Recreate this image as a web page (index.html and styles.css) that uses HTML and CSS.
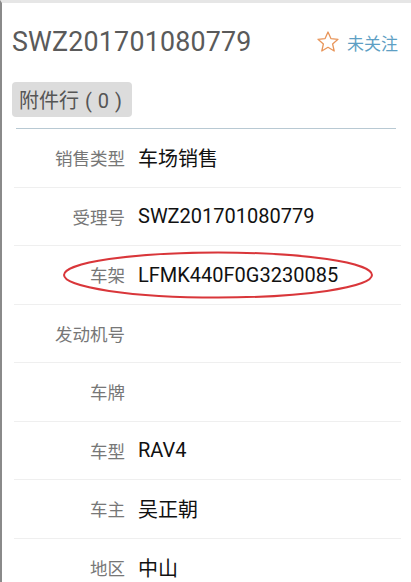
FILE: index.html
```html
<!DOCTYPE html>
<html lang="zh">
<head>
<meta charset="utf-8">
<link rel="stylesheet" href="styles.css">
</head>
<body>
<div class="page">
  <header class="head">
    <h1 class="title">SWZ201701080779</h1>
    <div class="follow">
      <svg class="star" viewBox="0 0 24 24" width="24" height="24"><polygon points="12,2 14.9,8.6 22,9.3 16.6,14 18.2,21 12,17.3 5.8,21 7.4,14 2,9.3 9.1,8.6" fill="none" stroke="#e8955a" stroke-width="1.3" stroke-linejoin="round"/></svg>
      <span class="follow-text">未关注</span>
    </div>
  </header>
  <div class="attach-wrap"><button class="attach">附件行 ( 0 )</button></div>
  <div class="sep"></div>
  <div class="list">
    <div class="row"><span class="label">销售类型</span><span class="value">车场销售</span></div>
    <div class="row"><span class="label">受理号</span><span class="value">SWZ201701080779</span></div>
    <div class="row marked"><span class="label">车架</span><span class="value">LFMK440F0G3230085</span>
      <svg class="ring" viewBox="0 0 312 50" width="312" height="50"><ellipse cx="156" cy="25" rx="154" ry="22.5" fill="none" stroke="#d9363a" stroke-width="2"/></svg>
    </div>
    <div class="row"><span class="label">发动机号</span><span class="value"></span></div>
    <div class="row"><span class="label">车牌</span><span class="value"></span></div>
    <div class="row"><span class="label">车型</span><span class="value">RAV4</span></div>
    <div class="row"><span class="label">车主</span><span class="value">吴正朝</span></div>
    <div class="row"><span class="label">地区</span><span class="value">中山</span></div>
  </div>
</div>
</body>
</html>
```

FILE: styles.css
```css
html, body {
  margin: 0;
  padding: 0;
  background: #fff;
  height: 100%;
  overflow: hidden;
}
body {
  font-family: "Roboto", "Noto Sans CJK SC", sans-serif;
}
.page {
  border-left: 2px solid #8a8a8a;
  border-top: 3px solid #e6e6e6;
  min-height: 100%;
  box-sizing: border-box;
}
.head {
  display: flex;
  align-items: center;
  justify-content: space-between;
  padding: 21px 13px 0 10px;
  height: 36px;
}
.title {
  margin: 0;
  font-weight: 400;
  font-size: 26.8px;
  color: #5a5a5a;
  letter-spacing: 0.2px;
}
.follow {
  display: flex;
  align-items: center;
  gap: 7px;
}
.star {
  display: block;
}
.follow-text {
  font-size: 17px;
  color: #5e9fc4;
}
.attach-wrap {
  padding: 22px 0 0 10px;
}
.attach {
  font-family: "Roboto", "Noto Sans CJK SC", sans-serif;
  font-size: 20px;
  color: #555;
  background: #dcdcdc;
  border: none;
  border-radius: 4px;
  height: 35px;
  width: 120px;
  padding: 0 0 0 7px;
  text-align: left;
  display: block;
  word-spacing: 1px;
}
.sep {
  margin: 11px 15px 0 14px;
  height: 1px;
  background: #b8c9d3;
}
.list {
  padding: 0 10px 0 12px;
}
.row {
  position: relative;
  display: flex;
  align-items: center;
  height: 57.5px;
  border-bottom: 1px solid #efefef;
}
.label {
  width: 111px;
  text-align: right;
  font-size: 17.5px;
  color: #777;
}
.value {
  margin-left: 13px;
  font-size: 20px;
  color: #111;
}
.ring {
  position: absolute;
  left: 48px;
  top: 4px;
  pointer-events: none;
}
```
